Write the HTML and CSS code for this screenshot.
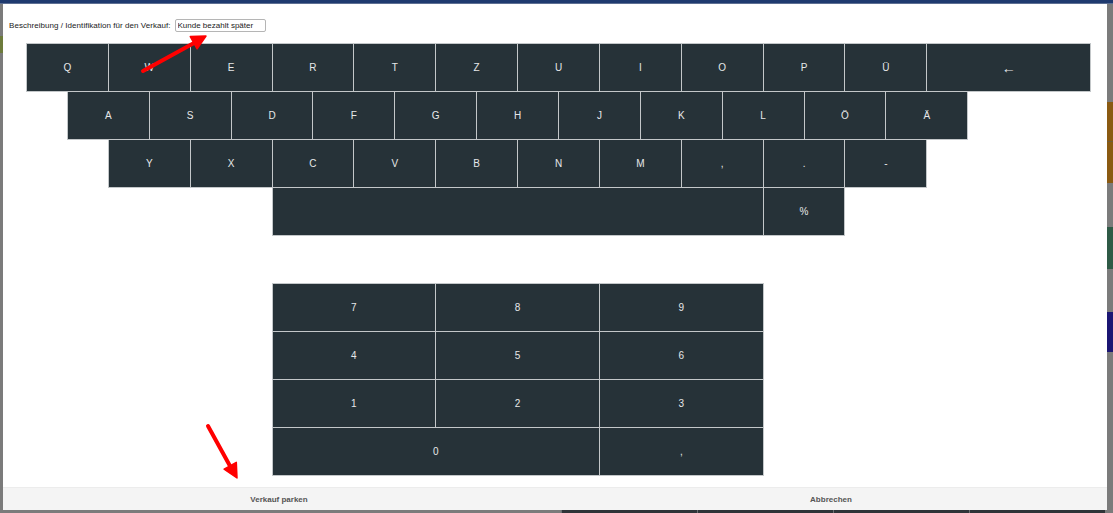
FILE: index.html
```html
<!DOCTYPE html>
<html lang="de">
<head>
<meta charset="utf-8">
<title>Verkauf parken</title>
<link rel="stylesheet" href="styles.css">
</head>
<body>
<div class="screen">
  <div class="topbar"></div>
  <div class="middle">
    <div class="side side-left"><div class="blk olive"></div></div>
    <div class="modal">
      <div class="field">
        <label class="field-label" for="desc">Beschreibung / Identifikation für den Verkauf:</label>
        <input class="field-input" id="desc" type="text" value="Kunde bezahlt später">
      </div>
      <div class="pads">
        <div class="grid keyboard">
          <button class="k">Q</button><button class="k">W</button><button class="k">E</button><button class="k">R</button><button class="k">T</button><button class="k">Z</button><button class="k">U</button><button class="k">I</button><button class="k">O</button><button class="k">P</button><button class="k">Ü</button><button class="k wide">←</button>
          <button class="k row2">A</button><button class="k">S</button><button class="k">D</button><button class="k">F</button><button class="k">G</button><button class="k">H</button><button class="k">J</button><button class="k">K</button><button class="k">L</button><button class="k">Ö</button><button class="k">Ä</button>
          <button class="k row3">Y</button><button class="k">X</button><button class="k">C</button><button class="k">V</button><button class="k">B</button><button class="k">N</button><button class="k">M</button><button class="k">,</button><button class="k">.</button><button class="k">-</button>
          <button class="k space"></button><button class="k">%</button>
        </div>
        <div class="grid numpad">
          <button class="k n start">7</button><button class="k n">8</button><button class="k n">9</button>
          <button class="k n start">4</button><button class="k n">5</button><button class="k n">6</button>
          <button class="k n start">1</button><button class="k n">2</button><button class="k n">3</button>
          <button class="k n zero">0</button><button class="k n">,</button>
        </div>
      </div>
      <div class="footer">
        <button class="foot-btn">Verkauf parken</button>
        <button class="foot-btn">Abbrechen</button>
      </div>
    </div>
    <div class="side side-right">
      <div class="blk orange first"></div>
      <div class="blk orange second"></div>
      <div class="blk green"></div>
      <div class="blk blue"></div>
    </div>
  </div>
  <div class="bottombar">
    <div class="seg light"></div>
    <div class="seg dark"></div>
    <div class="seg dark"></div>
    <div class="seg dark"></div>
    <div class="seg dark"></div>
    <div class="seg light end"></div>
  </div>
  <svg class="annot" width="1113" height="513" viewBox="0 0 1113 513">
    <line x1="143" y1="71" x2="194" y2="43" stroke="#ff0000" stroke-width="4" stroke-linecap="round"/>
    <polygon points="206,36 190.3,36.6 197.1,48.8" fill="#ff0000" stroke="#ff0000" stroke-width="1.5" stroke-linejoin="round"/>
    <line x1="208" y1="426" x2="230" y2="466" stroke="#ff0000" stroke-width="4" stroke-linecap="round"/>
    <polygon points="237,478 224.1,469.2 236.3,462.4" fill="#ff0000" stroke="#ff0000" stroke-width="1.5" stroke-linejoin="round"/>
  </svg>
</div>
</body>
</html>
```

FILE: styles.css
```css
* { box-sizing: border-box; }
html, body { margin: 0; padding: 0; }
body {
  font-family: "Liberation Sans", Arial, sans-serif;
  background: #7a7a7a;
}
.screen {
  position: relative;
  width: 1113px;
  height: 513px;
  overflow: hidden;
  background: #7a7a7a;
  display: flex;
  flex-direction: column;
}
.topbar {
  height: 4px;
  background: #1f3a6f;
  border-bottom: 1px solid #5d6f93;
}
.middle {
  display: flex;
  height: 506px;
}
.side { background: #7b7b7b; }
.side-left { width: 3px; padding-top: 32px; }
.side-right { width: 6px; padding-top: 98px; }
.blk { width: 100%; }
.olive { height: 17px; background: #6d7b3c; }
.orange { background: #8a5a12; }
.orange.first { height: 40px; border-bottom: 1px solid #6d5a3a; }
.orange.second { height: 41px; }
.green { height: 42px; margin-top: 44px; background: #2e5a46; }
.blue { height: 40px; margin-top: 43px; background: #1b1673; }

.modal {
  width: 1104px;
  background: #ffffff;
  display: flex;
  flex-direction: column;
}
.field {
  display: flex;
  align-items: center;
  gap: 4px;
  padding: 15px 0 0 6px;
  height: 28px;
}
.field-label {
  font-size: 8px;
  color: #222;
  letter-spacing: 0.05px;
}
.field-input {
  width: 91px;
  height: 13px;
  border: 1px solid #b5b5b5;
  border-radius: 2px;
  padding: 0 2px;
  font-family: "Liberation Sans", Arial, sans-serif;
  font-size: 8px;
  color: #222;
  background: #fff;
}
.pads {
  padding: 12px 0 0 24px;
  width: 1087px;
}
.grid {
  display: grid;
  grid-template-columns: repeat(26, 1fr);
  grid-auto-rows: 47px;
  gap: 1px;
  width: 1063px;
}
.numpad { margin-top: 49px; }
.k {
  grid-column: span 2;
  background: #263238;
  border: none;
  margin: 0;
  padding: 0;
  box-shadow: 0 0 0 1px #c3c7c9;
  color: #e6e8e9;
  font-family: "Liberation Sans", Arial, sans-serif;
  font-size: 10px;
  line-height: 1;
}
.k.wide { grid-column: span 4; font-size: 14px; }
.k.row2 { grid-column: 2 / span 2; }
.k.row3 { grid-column: 3 / span 2; }
.k.space { grid-column: 7 / span 12; }
.k.n { grid-column: span 4; }
.k.n.start { grid-column: 7 / span 4; }
.k.n.zero { grid-column: 7 / span 8; }

.footer {
  margin-top: auto;
  height: 23px;
  display: flex;
  background: #f4f4f4;
  border-top: 1px solid #ececec;
}
.foot-btn {
  flex: 1;
  background: transparent;
  border: none;
  font-family: "Liberation Sans", Arial, sans-serif;
  font-size: 8px;
  font-weight: bold;
  color: #555;
  padding: 0;
}
.bottombar {
  flex: 1;
  display: flex;
  background: #7b7b7b;
}
.seg { height: 100%; }
.seg.light { width: 561px; background: #7b7b7b; }
.seg.dark { width: 136px; background: #2f3438; border-left: 1px solid #6b6f72; }
.seg.end { width: 8px; }
.annot {
  position: absolute;
  top: 0;
  left: 0;
  pointer-events: none;
}
```
